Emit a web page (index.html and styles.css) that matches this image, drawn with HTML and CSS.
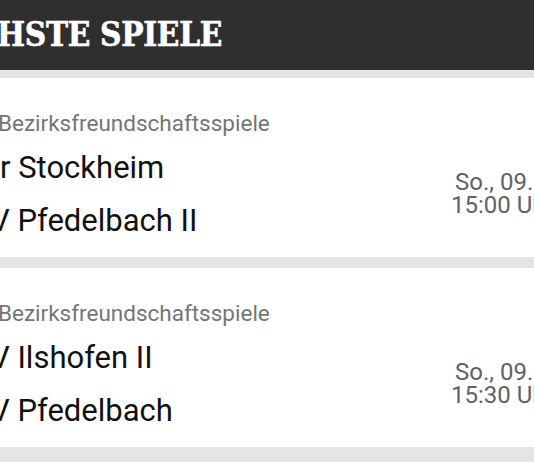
FILE: index.html
```html
<!DOCTYPE html>
<html lang="de">
  <head>
    <meta charset="UTF-8" />
    <title>Nächste Spiele</title>
    <link rel="stylesheet" href="styles.css">
  </head>
  <body>
    <!-- Header -->
    <div class="top-bar">
      <h1 class="title">HSTE SPIELE</h1>
    </div>

    <div class="games">
      <div class="card">
        <p class="league">Bezirksfreundschaftsspiele</p>
        <div class="match">
          <div class="teams">
            <p class="team home">r Stockheim</p>
            <p class="team away">V Pfedelbach II</p>
          </div>
          <div class="when">
            <span class="day">So., 09.06.</span>
            <span class="time">15:00 Uhr</span>
          </div>
        </div>
      </div>

      <div class="card">
        <p class="league">Bezirksfreundschaftsspiele</p>
        <div class="match">
          <div class="teams">
            <p class="team away">V Ilshofen II</p>
            <p class="team away">V Pfedelbach</p>
          </div>
          <div class="when">
            <span class="day">So., 09.06.</span>
            <span class="time">15:30 Uhr</span>
          </div>
        </div>
      </div>
    </div>
  </body>
</html>
```

FILE: styles.css
```css
body {
  margin: 0;
  background: #e5e5e5;
  font-family: Roboto, "Noto Sans", sans-serif;
  overflow: hidden;
}

.top-bar {
  height: 70px;
  background: #2f2f2f;
  display: flex;
  align-items: center;
}

.title {
  margin: 0 0 0 -3px;
  color: #fff;
  font-family: "DejaVu Serif", serif;
  font-stretch: condensed;
  font-weight: bold;
  font-size: 33px;
  line-height: 40px;
  letter-spacing: -0.3px;
  -webkit-text-stroke: 0.6px #fff;
  white-space: nowrap;
}

.games {
  padding-top: 8px;
}

.card {
  width: 534px;
  background: #fff;
  padding: 33px 0 10px;
  margin-bottom: 11px;
}

.league {
  margin: 0 0 0 -2px;
  font-size: 22.5px;
  line-height: 24px;
  color: #757575;
  white-space: nowrap;
}

.match {
  display: flex;
  align-items: center;
  margin-top: 6px;
}

.teams {
  flex: 1;
}

.team {
  margin: 0;
  font-size: 31px;
  line-height: 53px;
  color: #111;
  white-space: nowrap;
}

.team.home {
  margin-left: 0;
}

.team.away {
  margin-left: -10px;
}

.when {
  width: 83px;
  display: flex;
  flex-direction: column;
  font-size: 24px;
  line-height: 23px;
  color: #626262;
  white-space: nowrap;
}

.day {
  margin-left: 4px;
}
```
